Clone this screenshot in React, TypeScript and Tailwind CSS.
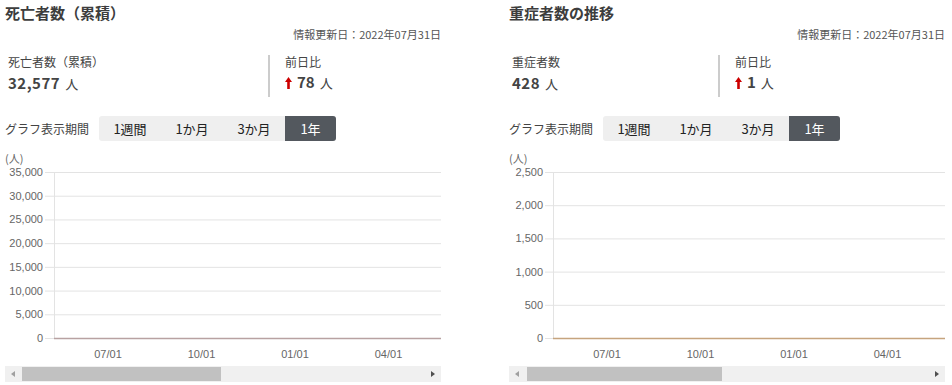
import React from 'react'

type Panel = {
  title: string
  label: string
  value: string
  diff: string
  max: number
  step: number
  labelX: number
  axisX: number
  lineColor: string
  divider: number
  thumbLeft: number
  thumbWidth: number
}

const panels: Panel[] = [
  {
    title: '死亡者数（累積）',
    label: '死亡者数（累積）',
    value: '32,577',
    diff: '78',
    max: 35000,
    step: 5000,
    labelX: 38,
    axisX: 49,
    lineColor: '#b8a2a2',
    divider: 263,
    thumbLeft: 17,
    thumbWidth: 199,
  },
  {
    title: '重症者数の推移',
    label: '重症者数',
    value: '428',
    diff: '1',
    max: 2500,
    step: 500,
    labelX: 34,
    axisX: 44,
    lineColor: '#c6a47e',
    divider: 209,
    thumbLeft: 18,
    thumbWidth: 195,
  },
]

const periods = ['1週間', '1か月', '3か月', '1年']
const months = ['07/01', '10/01', '01/01', '04/01']

const W = 436
const TOP = 7
const BOTTOM = 173

function Chart({ p }: { p: Panel }) {
  const ticks: number[] = []
  for (let v = 0; v <= p.max; v += p.step) ticks.push(v)
  const y = (v: number) => BOTTOM - ((BOTTOM - TOP) * v) / p.max

  return (
    <svg width={W} height={197} className="block">
      {ticks.map((v) => (
        <g key={v}>
          <line x1={p.labelX + 2} x2={W} y1={y(v) + 0.5} y2={y(v) + 0.5} stroke="#e3e3e3" />
          <text
            x={p.labelX}
            y={y(v) + 4}
            textAnchor="end"
            fontSize={11}
            fill="#666"
            fontFamily="'Liberation Sans', Arial, sans-serif"
          >
            {v.toLocaleString('en-US')}
          </text>
        </g>
      ))}
      <line x1={p.axisX + 0.5} x2={p.axisX + 0.5} y1={TOP} y2={BOTTOM} stroke="#e3e3e3" />
      <line x1={p.axisX} x2={W} y1={BOTTOM + 0.5} y2={BOTTOM + 0.5} stroke={p.lineColor} strokeWidth={1.5} />
      {months.map((m, i) => (
        <text
          key={m}
          x={p.axisX + 54 + 93.5 * i}
          y={193}
          textAnchor="middle"
          fontSize={11}
          fill="#666"
          fontFamily="'Liberation Sans', Arial, sans-serif"
        >
          {m}
        </text>
      ))}
    </svg>
  )
}

function UpArrow() {
  return (
    <svg width="7" height="12" viewBox="0 0 7 12" className="self-center">
      <path d="M3.5 0 L7 5 L4.8 5 L4.8 12 L2.2 12 L2.2 5 L0 5 Z" fill="#cc0000" />
    </svg>
  )
}

function Scrollbar({ p }: { p: Panel }) {
  return (
    <div className="relative mt-[4px] h-[16px] w-full bg-[#f0f0f0]">
      <span className="absolute left-[6px] top-[5px] h-0 w-0 border-y-[3px] border-r-[4px] border-y-transparent border-r-[#a0a0a0]" />
      <div
        className="absolute top-[1px] h-[14px] bg-[#c1c1c1]"
        style={{ left: p.thumbLeft, width: p.thumbWidth }}
      />
      <span className="absolute right-[6px] top-[5px] h-0 w-0 border-y-[3px] border-l-[4px] border-y-transparent border-l-[#505050]" />
    </div>
  )
}

function PanelView({ p }: { p: Panel }) {
  return (
    <div className="w-[436px] shrink-0">
      <div className="h-[25px] text-[15px] font-bold leading-[25px] text-[#3d3d3d]">{p.title}</div>
      <div className="h-[19px] text-right text-[11px] leading-[19px] text-[#555]">情報更新日：2022年07月31日</div>
      <div className="mt-[8px] flex h-[45px]">
        <div className="shrink-0 pl-[3px]" style={{ width: p.divider }}>
          <div className="text-[12px] leading-[20px] text-[#444]">{p.label}</div>
          <div className="flex items-baseline gap-[5px] leading-[22px] text-[#444]">
            <span className="text-[15px] font-bold tracking-[0.5px]">{p.value}</span>
            <span className="text-[13px]">人</span>
          </div>
        </div>
        <div className="mt-[3px] border-l-2 border-[#cccccc] pl-[15px]">
          <div className="text-[12px] leading-[14px] text-[#444]">前日比</div>
          <div className="mt-[1px] flex items-baseline gap-[5px] leading-[24px] text-[#444]">
            <UpArrow />
            <span className="text-[15px] font-bold">{p.diff}</span>
            <span className="text-[13px]">人</span>
          </div>
        </div>
      </div>
      <div className="mt-[19px] flex h-[25px] items-center">
        <span className="w-[94px] text-[12px] text-[#444]">グラフ表示期間</span>
        <div className="flex h-[25px] overflow-hidden rounded-[3px] bg-[#efefef] text-[13px]">
          {periods.map((t, i) => (
            <div
              key={t}
              className={
                i === 3
                  ? 'flex w-[51px] items-center justify-center bg-[#53585e] text-white'
                  : 'flex w-[62px] items-center justify-center text-[#222]'
              }
            >
              {t}
            </div>
          ))}
        </div>
      </div>
      <div className="mt-[10px] h-[14px] text-[11px] leading-[14px] text-[#666]">(人)</div>
      <Chart p={p} />
      <Scrollbar p={p} />
    </div>
  )
}

export default function App() {
  return (
    <div
      className="flex h-[385px] w-[952px] bg-white pl-[5px]"
      style={{ fontFamily: "'Noto Sans CJK JP', 'Liberation Sans', sans-serif" }}
    >
      <PanelView p={panels[0]} />
      <div className="w-[68px] shrink-0" />
      <PanelView p={panels[1]} />
    </div>
  )
}
